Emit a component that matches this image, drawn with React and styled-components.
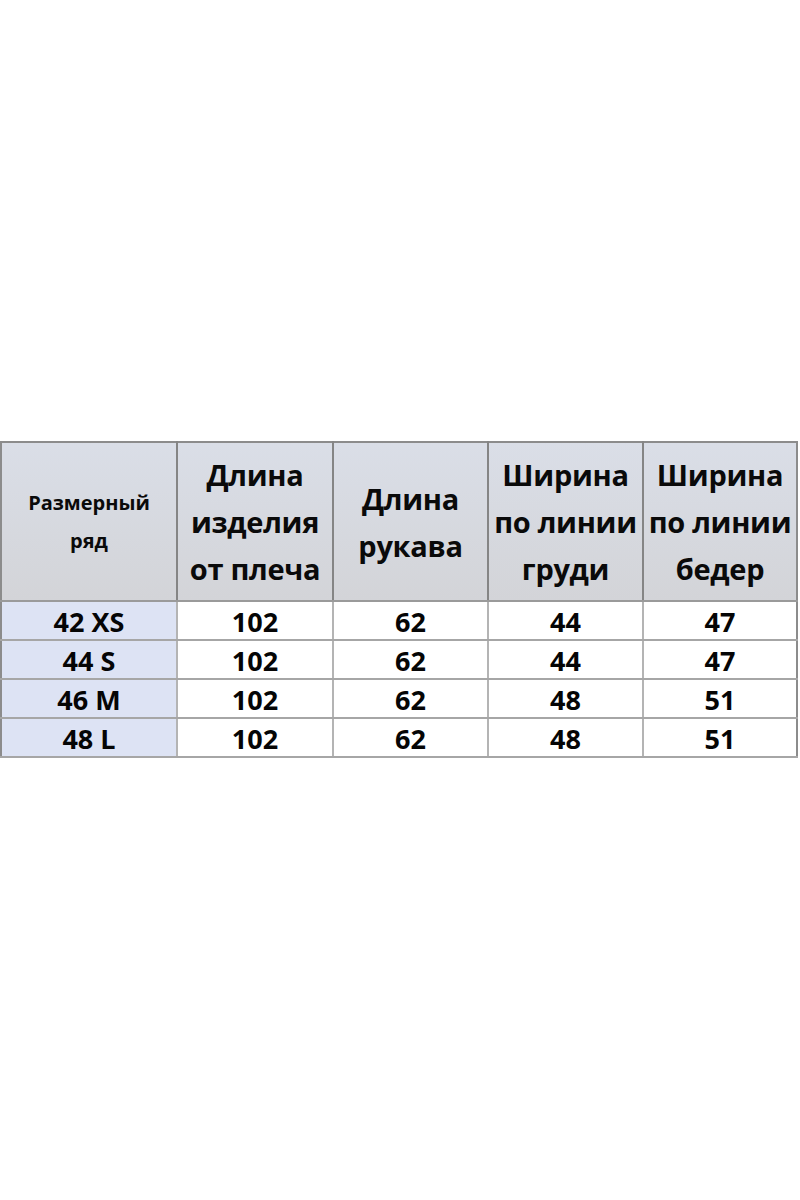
import React from 'react';
import styled, { createGlobalStyle } from 'styled-components';

const GlobalStyle = createGlobalStyle`
    body{
        margin:0;
        background:#ffffff;
        font-family:"Open Sans","Noto Sans",sans-serif;
    }
`

const columns = [
    { title: ['Размерный', 'ряд'], small: true, width: 176 },
    { title: ['Длина', 'изделия', 'от плеча'], width: 156 },
    { title: ['Длина', 'рукава'], width: 155 },
    { title: ['Ширина', 'по линии', 'груди'], width: 155 },
    { title: ['Ширина', 'по линии', 'бедер'], width: 154 },
]

const rows = [
    ['42 XS', '102', '62', '44', '47'],
    ['44 S', '102', '62', '44', '47'],
    ['46 M', '102', '62', '48', '51'],
    ['48 L', '102', '62', '48', '51'],
]

const App = () => {
    return (
        <Page>
            <GlobalStyle />
            <Table>
                <colgroup>
                    {columns.map((c, i) => <col key={i} style={{ width: c.width }} />)}
                </colgroup>
                <thead>
                    <tr>
                        {columns.map((c, i) => (
                            <HeadCell key={i} $small={c.small}>
                                {c.title.map((line, j) => <div key={j}>{line}</div>)}
                            </HeadCell>
                        ))}
                    </tr>
                </thead>
                <tbody>
                    {rows.map((r, i) => (
                        <tr key={i}>
                            {r.map((v, j) => (
                                <Cell key={j} $first={j === 0}>{v}</Cell>
                            ))}
                        </tr>
                    ))}
                </tbody>
            </Table>
        </Page>
    )
}

const Page = styled.div`
    width:800px;
    height:1200px;
    padding:441px 0 0 0;
    box-sizing:border-box;
`

const Table = styled.table`
    width:797px;
    border-collapse:collapse;
    table-layout:fixed;
    border:2px solid #8c8c8c;
    border-bottom-color:#a3a3a3;
`

const HeadCell = styled.th`
    height:157px;
    padding:0;
    background:linear-gradient(#dadee7, #d3d4d8);
    border-left:2px solid #858585;
    border-bottom:2px solid #9a9a9a;
    color:#0a0a0a;
    font-weight:700;
    font-size:${p => p.$small ? '20px' : '29px'};
    line-height:${p => p.$small ? '38px' : '47px'};
    letter-spacing:${p => p.$small ? '0' : '-0.3px'};
    text-align:center;
    vertical-align:middle;
    white-space:nowrap;
    &:first-child{
        border-left:none;
    }
`

const Cell = styled.td`
    height:37px;
    padding:2px 0 0 0;
    box-sizing:border-box;
    background:${p => p.$first ? '#dde3f4' : '#ffffff'};
    border-left:2px solid #b4b4b4;
    border-bottom:2px solid #a6a6a6;
    color:#050505;
    font-weight:700;
    font-size:27px;
    line-height:35px;
    text-align:center;
    &:first-child{
        border-left:none;
    }
`

export default App
